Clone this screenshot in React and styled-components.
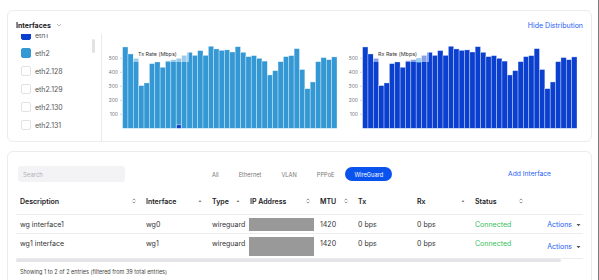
import React from 'react';
import styled, { createGlobalStyle } from 'styled-components';

const GlobalStyle = createGlobalStyle`
  html, body { margin: 0; padding: 0; background: #fff; }
  body { font-family: Inter, "Liberation Sans", sans-serif; color: #333; }
  * { box-sizing: border-box; }
`;

const rates = [
  581, 531, 500, 305, 324, 462, 474, 436, 483, 490,
  500, 521, 543, 521, 555, 521, 586, 567, 557, 560,
  545, 583, 543, 512, 519, 500, 480, 381, 412, 476,
  512, 519, 569, 420, 283, 331, 476, 505, 490, 510,
];

const interfaces = [
  { name: 'eth1', color: '#0b3fd0' },
  { name: 'eth2', color: '#3498d4' },
  { name: 'eth2.128' },
  { name: 'eth2.129' },
  { name: 'eth2.130' },
  { name: 'eth2.131' },
];

const rows = [
  { desc: 'wg interface1', iface: 'wg0', ipHeight: 13 },
  { desc: 'wg1 interface', iface: 'wg1', ipHeight: 19 },
];

const columns = [
  { label: 'Description', sort: 'both' },
  { label: 'Interface', sort: 'up' },
  { label: 'Type', sort: 'up' },
  { label: 'IP Address', sort: 'both' },
  { label: 'MTU', sort: 'both' },
  { label: 'Tx' },
  { label: 'Rx', sort: 'up' },
  { label: 'Status', sort: 'both' },
  { label: '' },
];

const tabs = ['All', 'Ethernet', 'VLAN', 'PPPoE', 'WireGuard'];

const BASE = 94.3;
const SCALE = 0.14;
const START = 20.6;
const PITCH = 5.36;

const RateChart = ({ label, color, accent, accentIndex, accentValue, accentBottom }) => (
  <ChartSvg height="108">
    {[100, 200, 300, 400, 500].map(v => (
      <g key={v}>
        <text x="16" y={BASE - v * SCALE + 2} fontSize="5" fill="#777" textAnchor="end">{v}</text>
        <line x1="18" x2="20" y1={BASE - v * SCALE} y2={BASE - v * SCALE} stroke="#bbb" strokeWidth="0.6" />
      </g>
    ))}
    {rates.map((v, i) => (
      <rect
        key={i}
        x={START + i * PITCH}
        y={BASE - v * SCALE}
        width={PITCH}
        height={v * SCALE}
        fill={color}
        stroke="rgba(255,255,255,0.55)"
        strokeWidth="0.6"
      />
    ))}
    {accentBottom ? (
      <rect x={START + accentIndex * PITCH + 0.4} y={BASE - accentValue * SCALE} width={PITCH - 0.8}
        height={accentValue * SCALE} fill={accent} stroke="rgba(255,255,255,0.7)" strokeWidth="0.6" />
    ) : (
      <rect x={START + accentIndex * PITCH + 0.4} y={BASE - rates[accentIndex] * SCALE} width={PITCH - 0.8}
        height={accentValue * SCALE} fill={accent} />
    )}
    <rect x="31" y="15" width="56" height="13" fill="rgba(255,255,255,0.5)" />
    <text x="36" y="22" fontSize="5.4" fill="#333">{label}</text>
  </ChartSvg>
);

const SortIcon = ({ kind }) => kind === 'both' ? (
  <svg width="4" height="6" viewBox="0 0 4 6">
    <path d="M0.6 2.3 L2 0.9 L3.4 2.3 M0.6 3.7 L2 5.1 L3.4 3.7" fill="none" stroke="#666" strokeWidth="0.7" />
  </svg>
) : (
  <svg width="4" height="6" viewBox="0 0 4 6">
    <path d="M0.5 3.8 L2 2.2 L3.5 3.8 Z" fill="#555" />
  </svg>
);

const App = () => (
  <Page>
    <GlobalStyle />
    <Card>
      <CardHeader>
        <Title>
          Interfaces
          <svg width="6" height="4" viewBox="0 0 6 4">
            <path d="M1 1 L3 3 L5 1" fill="none" stroke="#aaa" strokeWidth="0.8" />
          </svg>
        </Title>
        <LinkText>Hide Distribution</LinkText>
      </CardHeader>
      <Distribution>
        <ListPane>
          <ListItems>
            {interfaces.map(item => (
              <ListItem key={item.name}>
                <Check color={item.color} />
                {item.name}
              </ListItem>
            ))}
          </ListItems>
          <ScrollTrack>
            <ScrollThumb />
          </ScrollTrack>
        </ListPane>
        <ChartBox>
          <RateChart label="Tx Rate (Mbps)" color="#3498d4" accent="#0b3fd0" accentIndex={10} accentValue={25} accentBottom />
        </ChartBox>
        <ChartBox>
          <RateChart label="Rx Rate (Mbps)" color="#0b3fd0" accent="#3aa3dc" accentIndex={10} accentValue={32} />
        </ChartBox>
      </Distribution>
    </Card>

    <TableCard>
      <Toolbar>
        <Search placeholder="Search" />
        <Tabs>
          {tabs.map(t => (
            <Tab key={t} active={t === 'WireGuard'}>{t}</Tab>
          ))}
        </Tabs>
        <AddLink>Add Interface</AddLink>
      </Toolbar>
      <Table>
        <HeadRow>
          {columns.map((c, i) => (
            <HeadCell key={i}>
              <span>{c.label}</span>
              {c.sort && <SortIcon kind={c.sort} />}
            </HeadCell>
          ))}
        </HeadRow>
        {rows.map(r => (
          <Row key={r.iface}>
            <Cell>{r.desc}</Cell>
            <Cell>{r.iface}</Cell>
            <Cell>wireguard</Cell>
            <Cell><Redacted h={r.ipHeight} /></Cell>
            <Cell>1420</Cell>
            <Cell>0 bps</Cell>
            <Cell>0 bps</Cell>
            <Cell><Status>Connected</Status></Cell>
            <ActionCell>
              <LinkText>Actions</LinkText>
              <svg width="5" height="4" viewBox="0 0 5 4">
                <path d="M0.5 1 L4.5 1 L2.5 3.2 Z" fill="#555" />
              </svg>
            </ActionCell>
          </Row>
        ))}
      </Table>
      <HScroll>
        <HThumb />
      </HScroll>
      <Footer>Showing 1 to 2 of 2 entries (filtered from 39 total entries)</Footer>
    </TableCard>
  </Page>
);

const Page = styled.div`
  width: 599px;
  height: 280px;
  overflow: hidden;
  padding: 10px 6px 0 7px;
  border-right: 1px solid #7a7a7a;
`;

const Card = styled.div`
  border: 1px solid #ececec;
  border-radius: 6px;
  background: #fff;
  padding: 9px 10px 0 8px;
  height: 132px;
`;

const CardHeader = styled.div`
  display: flex;
  justify-content: space-between;
  align-items: center;
  height: 10px;
  margin-bottom: 4px;
`;

const Title = styled.div`
  display: flex;
  align-items: center;
  gap: 5px;
  font-size: 7px;
  font-weight: 700;
  color: #1c1c1e;
`;

const LinkText = styled.span`
  font-size: 7px;
  color: #1d5cf5;
  margin-right: -2px;
`;

const Distribution = styled.div`
  display: flex;
  height: 108px;
`;

const ListPane = styled.div`
  width: 86px;
  display: flex;
  border-right: 1px solid #eaeaea;
  overflow: hidden;
`;

const ListItems = styled.div`
  flex: 1;
  margin-top: -8px;
`;

const ListItem = styled.div`
  display: flex;
  align-items: center;
  gap: 4px;
  height: 18px;
  padding-left: 5px;
  font-size: 7px;
  color: #555;
`;

const Check = styled.span`
  width: 10px;
  height: 10px;
  border-radius: 2px;
  background: ${p => p.color || '#fff'};
  border: 1px solid ${p => p.color || '#e2e2e2'};
`;

const ScrollTrack = styled.div`
  width: 4px;
  margin-right: 5px;
  padding-top: 5px;
`;

const ScrollThumb = styled.div`
  width: 3px;
  height: 14px;
  border-radius: 2px;
  background: #e2e2e4;
`;

const ChartBox = styled.div`
  flex: 1;
`;

const ChartSvg = styled.svg`
  display: block;
  width: 100%;
  font-family: Inter, "Liberation Sans", sans-serif;
`;

const TableCard = styled.div`
  margin-top: 9px;
  border: 1px solid #ececec;
  border-radius: 6px;
  background: #fff;
  padding: 14px 10px 20px 10px;
`;

const Toolbar = styled.div`
  display: grid;
  grid-template-columns: 184px auto 1fr;
  align-items: center;
  margin-bottom: 6px;
`;

const Search = styled.input`
  width: 107px;
  height: 16px;
  border: none;
  border-radius: 3px;
  background: #f3f3f5;
  padding: 0 5px;
  font-family: inherit;
  font-size: 6px;
  outline: none;
  &::placeholder { color: #b0b0b5; }
`;

const Tabs = styled.div`
  display: flex;
  align-items: center;
`;

const Tab = styled.div`
  height: 14px;
  display: flex;
  align-items: center;
  padding: 0 ${p => (p.active ? '9px' : '10px')};
  margin-left: ${p => (p.active ? '1px' : '0')};
  border-radius: 7px;
  font-size: 5.7px;
  color: ${p => (p.active ? '#fff' : '#777')};
  background: ${p => (p.active ? '#0a52ee' : 'transparent')};
`;

const AddLink = styled.span`
  justify-self: end;
  margin-right: 30px;
  font-size: 6.7px;
  color: #1d5cf5;
`;

const Table = styled.div`
  margin: 0 -2px;
`;

const gridCols = '126px 66px 38px 70px 38px 59px 58px 58px 1fr';

const HeadRow = styled.div`
  display: grid;
  grid-template-columns: ${gridCols};
  height: 27px;
  align-items: center;
  border-bottom: 1px solid #ececec;
`;

const HeadCell = styled.div`
  display: flex;
  align-items: center;
  justify-content: space-between;
  padding: 0 6px 0 4px;
  font-size: 7px;
  font-weight: 600;
  color: #1c1c1e;
`;

const Row = styled.div`
  display: grid;
  grid-template-columns: ${gridCols};
  align-items: start;
  padding: 3px 0 2px;
  border-bottom: 1px solid #ececec;
`;

const Cell = styled.div`
  padding: 2px 4px 0 4px;
  font-size: 7px;
  line-height: 9px;
  color: #333;
`;

const Redacted = styled.div`
  width: 65px;
  height: ${p => p.h}px;
  margin: -2px 0 0 -1px;
  background: #999;
`;

const Status = styled.span`
  color: #34c25a;
`;

const ActionCell = styled.div`
  align-self: center;
  display: flex;
  align-items: center;
  justify-content: flex-end;
  gap: 6px;
  padding-right: 2px;
  font-size: 7px;
`;

const HScroll = styled.div`
  margin: 0 -2px;
  height: 3px;
`;

const HThumb = styled.div`
  width: 545px;
  height: 3px;
  border-radius: 2px;
  background: #e4e4e8;
`;

const Footer = styled.div`
  margin-top: 7px;
  padding-left: 2px;
  font-size: 5.5px;
  color: #444;
`;

export default App;
